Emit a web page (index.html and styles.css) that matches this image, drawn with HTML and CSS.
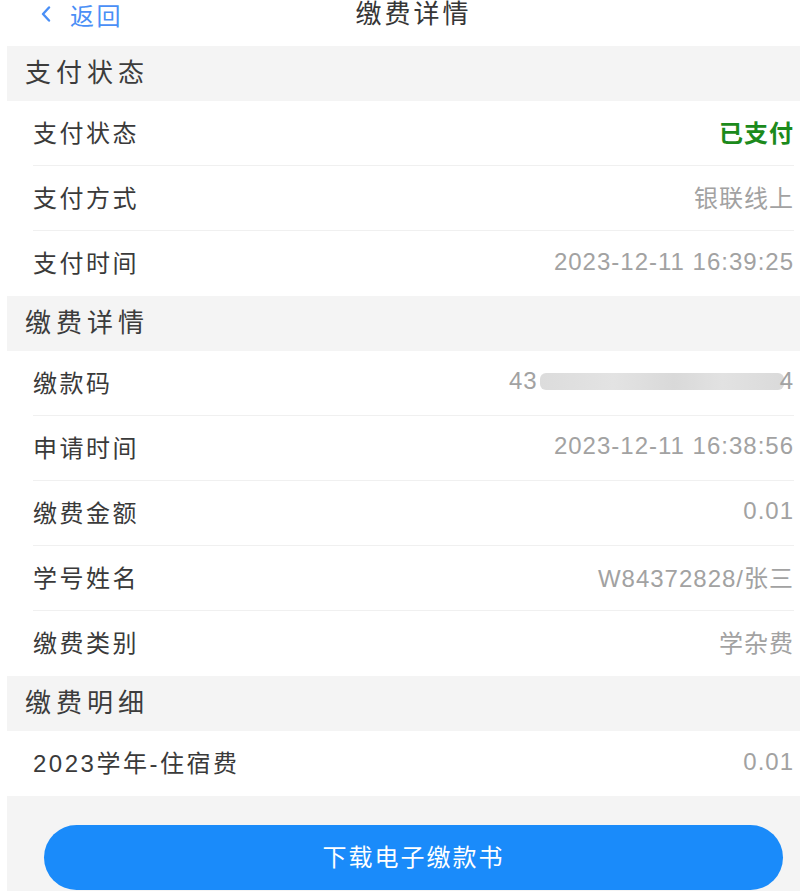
FILE: index.html
```html
<!DOCTYPE html>
<html lang="zh-CN">
<head>
    <meta charset="UTF-8">
    <meta name="viewport" content="width=device-width, initial-scale=1.0">
    <title>缴费详情</title>
    <link rel="stylesheet" href="styles.css">
</head>
<body>
    <div class="page">
        <!-- 顶部导航 -->
        <div class="nav">
            <a class="back" href="#">
                <svg width="10" height="16" viewBox="0 0 10 16"><polyline points="8,1.5 2,8 8,14.5" fill="none" stroke="#4a8ff6" stroke-width="2.4" stroke-linecap="round" stroke-linejoin="round"/></svg>
                <span>返回</span>
            </a>
            <div class="nav-title">缴费详情</div>
            <div></div>
        </div>

        <div class="section-title">支付状态</div>
        <div class="list">
            <div class="row"><span class="label">支付状态</span><span class="value paid">已支付</span></div>
            <div class="row"><span class="label">支付方式</span><span class="value">银联线上</span></div>
            <div class="row"><span class="label">支付时间</span><span class="value">2023-12-11 16:39:25</span></div>
        </div>

        <div class="section-title">缴费详情</div>
        <div class="list">
            <div class="row"><span class="label">缴款码</span><span class="value">43<span class="mask"></span>4</span></div>
            <div class="row"><span class="label">申请时间</span><span class="value">2023-12-11 16:38:56</span></div>
            <div class="row"><span class="label">缴费金额</span><span class="value">0.01</span></div>
            <div class="row"><span class="label">学号姓名</span><span class="value">W84372828/张三</span></div>
            <div class="row"><span class="label">缴费类别</span><span class="value">学杂费</span></div>
        </div>

        <div class="section-title">缴费明细</div>
        <div class="list">
            <div class="row"><span class="label">2023学年-住宿费</span><span class="value">0.01</span></div>
        </div>

        <div class="footer">
            <button class="download">下载电子缴款书</button>
        </div>
    </div>
</body>
</html>
```

FILE: styles.css
```css
html, body {
    margin: 0;
    padding: 0;
    background: #ffffff;
    overflow: hidden;
}
body {
    font-family: "Liberation Sans", "Noto Sans CJK SC", sans-serif;
    color: #383838;
}
.page {
    width: 813px;
    margin-left: 7px;
}
.nav {
    height: 46px;
    display: grid;
    grid-template-columns: 1fr auto 1fr;
    align-items: start;
    background: #ffffff;
}
.back {
    display: flex;
    align-items: center;
    gap: 19px;
    padding-left: 34px;
    height: 28px;
    color: #4a8ff6;
    text-decoration: none;
    font-size: 24px;
    letter-spacing: 2.5px;
}
.nav-title {
    line-height: 28px;
    font-size: 26px;
    letter-spacing: 3px;
    color: #363636;
}
.section-title {
    height: 55px;
    line-height: 55px;
    padding-left: 18px;
    background: #f4f4f4;
    font-size: 26px;
    letter-spacing: 5px;
    color: #3c3c3c;
}
.list {
    background: #ffffff;
}
.row {
    box-sizing: border-box;
    height: 65px;
    margin: 0 26px;
    padding-bottom: 4px;
    display: flex;
    justify-content: space-between;
    align-items: center;
    border-bottom: 1px solid #f0f0f0;
    font-size: 24px;
}
.row:last-child {
    border-bottom: none;
}
.label {
    color: #3a3a3a;
    letter-spacing: 2.5px;
}
.value {
    color: #a2a2a2;
    letter-spacing: 1px;
    display: flex;
    align-items: center;
}
.value.paid {
    color: #1c8a1c;
    font-weight: bold;
}
.mask {
    display: inline-block;
    width: 244px;
    height: 17px;
    margin: 0 -4px 0 2px;
    border-radius: 6px;
    background: linear-gradient(90deg, #dcdcdc, #e3e3e3 30%, #d9d9d9 55%, #e2e2e2 75%, #dadada);
}
.footer {
    background: #f4f4f4;
    padding: 29px 37px 20px;
}
.download {
    display: block;
    width: 100%;
    height: 65px;
    padding-bottom: 6px;
    border: none;
    border-radius: 33px;
    background: #1a8bfa;
    color: #ffffff;
    font-family: "Liberation Sans", "Noto Sans CJK SC", sans-serif;
    font-size: 24px;
    letter-spacing: 2px;
}
```
